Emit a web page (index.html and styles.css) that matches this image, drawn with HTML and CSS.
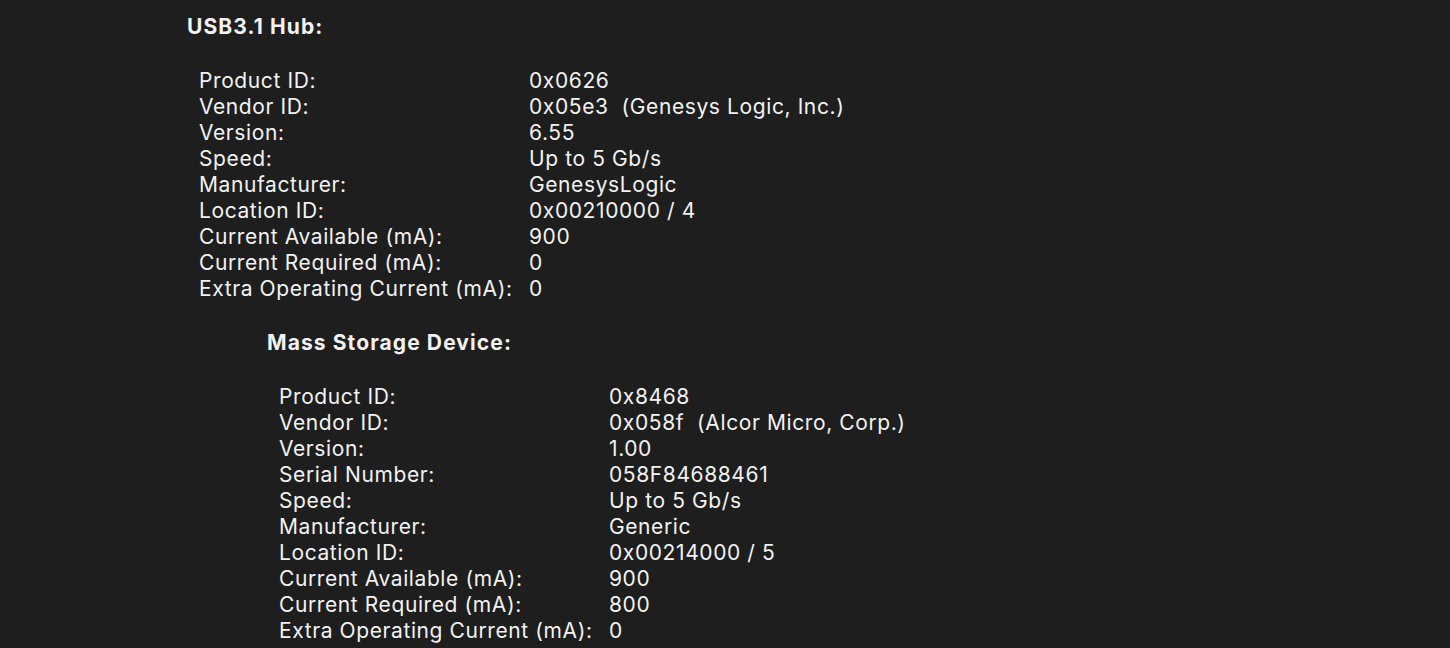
FILE: index.html
```html
<!DOCTYPE html>
<html>
<head>
<meta charset="utf-8">
<link rel="stylesheet" href="styles.css">
</head>
<body>
<div class="page">
  <section class="device">
    <h2 class="title">USB3.1 Hub:</h2>
    <div class="props">
      <div class="k">Product ID:</div><div class="v">0x0626</div>
      <div class="k">Vendor ID:</div><div class="v">0x05e3&nbsp; (Genesys Logic, Inc.)</div>
      <div class="k">Version:</div><div class="v">6.55</div>
      <div class="k">Speed:</div><div class="v">Up to 5 Gb/s</div>
      <div class="k">Manufacturer:</div><div class="v">GenesysLogic</div>
      <div class="k">Location ID:</div><div class="v">0x00210000 / 4</div>
      <div class="k">Current Available (mA):</div><div class="v">900</div>
      <div class="k">Current Required (mA):</div><div class="v">0</div>
      <div class="k">Extra Operating Current (mA):</div><div class="v">0</div>
    </div>
    <section class="device child">
      <h2 class="title">Mass Storage Device:</h2>
      <div class="props">
        <div class="k">Product ID:</div><div class="v">0x8468</div>
        <div class="k">Vendor ID:</div><div class="v">0x058f&nbsp; (Alcor Micro, Corp.)</div>
        <div class="k">Version:</div><div class="v">1.00</div>
        <div class="k">Serial Number:</div><div class="v">058F84688461</div>
        <div class="k">Speed:</div><div class="v">Up to 5 Gb/s</div>
        <div class="k">Manufacturer:</div><div class="v">Generic</div>
        <div class="k">Location ID:</div><div class="v">0x00214000 / 5</div>
        <div class="k">Current Available (mA):</div><div class="v">900</div>
        <div class="k">Current Required (mA):</div><div class="v">800</div>
        <div class="k">Extra Operating Current (mA):</div><div class="v">0</div>
      </div>
    </section>
  </section>
</div>
</body>
</html>
```

FILE: styles.css
```css
html, body {
  margin: 0;
  padding: 0;
  background: #1e1e1e;
  height: 100%;
  overflow: hidden;
}
.page {
  padding: 14px 0 0 187px;
  color: #f2f2f2;
  font-family: Inter, "Helvetica Neue", "Liberation Sans", sans-serif;
  font-size: 21px;
  line-height: 26px;
  letter-spacing: 0.6px;
}
.title {
  margin: 0;
  font-size: 21px;
  font-weight: 700;
  line-height: 26px;
  letter-spacing: 1.1px;
}
.props {
  display: grid;
  grid-template-columns: 330px auto;
  justify-content: start;
  margin: 28px 0 0 12px;
}
.k, .v {
  white-space: pre;
}
.child {
  margin: 28px 0 0 80px;
}
```
